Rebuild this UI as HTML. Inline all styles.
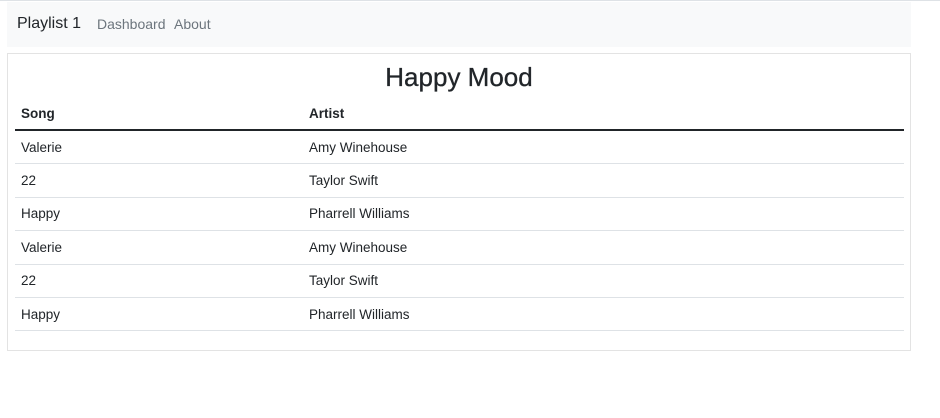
<!DOCTYPE html>
<html><head><style>
body{margin:0;width:940px;height:418px;background:#fff;font-family:"Liberation Sans",sans-serif;color:#212529;border-top:1px solid #dee2e6;box-sizing:border-box;position:relative;overflow:hidden}
.nav{position:absolute;left:7px;top:1px;width:904px;height:45px;background:#f8f9fa}
.brand{position:absolute;left:10px;top:13px;font-size:16px;color:#212529}
.l{position:absolute;top:14px;font-size:14px;color:#6c757d}
.card{position:absolute;left:7px;top:52px;width:902px;height:296px;border:1px solid #e3e3e3}
h1{position:absolute;left:0;right:0;top:8px;margin:0;text-align:center;font-weight:400;font-size:26px;-webkit-text-stroke:0.3px #212529}
table{position:absolute;left:7px;top:46px;width:889px;border-collapse:collapse;font-size:13.5px}
th{text-align:left;height:26px;padding:0 6px 3px;border-bottom:2px solid #212529;font-weight:bold;vertical-align:middle}
td{height:32.4px;padding:0 6px;border-bottom:1px solid #dee2e6}
th:first-child{width:276px}
</style></head><body>
<div class="nav"><span class="brand">Playlist 1</span><span class="l" style="left:90px">Dashboard</span><span class="l" style="left:167px">About</span></div>
<div class="card"><h1>Happy Mood</h1>
<table><tr><th>Song</th><th>Artist</th></tr>
<tr><td>Valerie</td><td>Amy Winehouse</td></tr>
<tr><td>22</td><td>Taylor Swift</td></tr>
<tr><td>Happy</td><td>Pharrell Williams</td></tr>
<tr><td>Valerie</td><td>Amy Winehouse</td></tr>
<tr><td>22</td><td>Taylor Swift</td></tr>
<tr><td>Happy</td><td>Pharrell Williams</td></tr>
</table></div>
</body></html>
